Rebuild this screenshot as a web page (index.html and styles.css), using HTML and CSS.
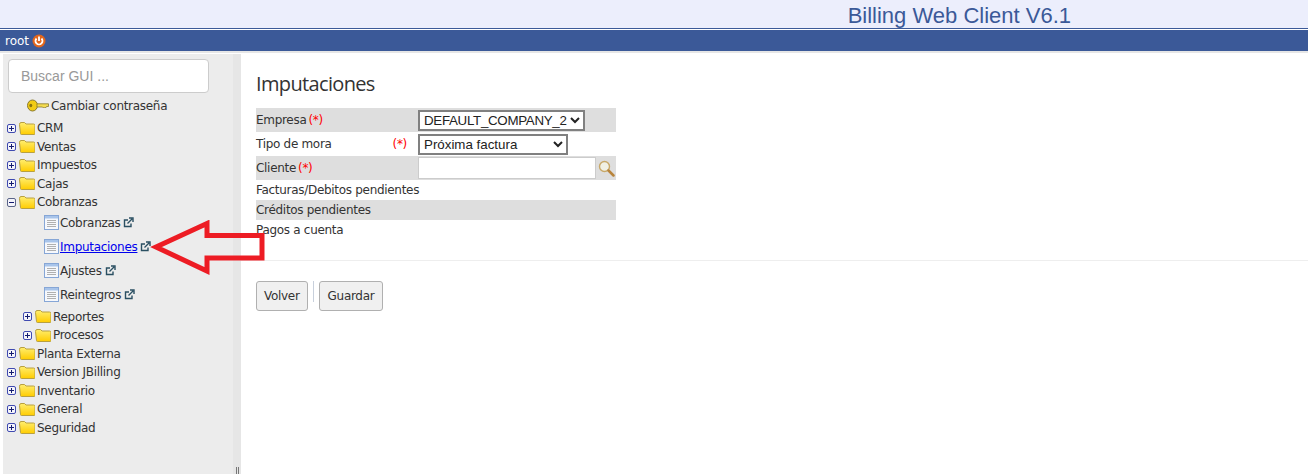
FILE: index.html
```html
<!DOCTYPE html>
<html lang="en">
<head>
    <meta charset="UTF-8">
    <title>Billing Web Client V6.1</title>
    <link rel="stylesheet" href="styles.css">
</head>
<body>
    <svg class="defs" width="0" height="0">
        <linearGradient id="folderFill" x1="0" y1="0" x2="0" y2="1"><stop offset="0" stop-color="#ffee70"/><stop offset="1" stop-color="#ffcc00"/></linearGradient>
        <symbol id="plus" viewBox="0 0 9 9"><rect x=".5" y=".5" width="8" height="8" rx="1.500" fill="#f4f4fa" stroke="#3f4ab0"/><path d="M2 4.500h5M4.500 2v5" stroke="#141c70"/></symbol>
        <symbol id="minus" viewBox="0 0 9 9"><rect x=".5" y=".5" width="8" height="8" rx="1.500" fill="#f4f4fa" stroke="#5a6488"/><path d="M2 4.500h5" stroke="#141c70"/></symbol>
        <symbol id="folder" viewBox="0 0 16 13"><path d="M.5 2.500q0-2 1.500-2h3.500l1.500 1.500h7.500q1.500 0 1.500 1.500v8q0 1-1 1h-12.500q-1 0-1-1z" fill="url(#folderFill)" stroke="#b8a040"/></symbol>
        <symbol id="page" viewBox="0 0 15 15"><rect x=".5" y=".5" width="14" height="14" fill="#f6f8fc" stroke="#86a6d6"/><rect x="1" y="1" width="13" height="2.500" fill="#a8c4ea"/><path d="M3 5.500h9M3 7.500h9M3 9.500h9M3 11.500h9" stroke="#b0b0b0"/></symbol>
        <symbol id="ext" viewBox="0 0 11 11"><path d="M8 6.500v3H1.500V3H5" fill="none" stroke="#2a4f62" stroke-width="1.400"/><path d="M4.500 6.500 9 2M6 1h4v4" fill="none" stroke="#2a4f62" stroke-width="1.400"/></symbol>
    </svg>

    <div class="banner">
        <span class="app-title">Billing Web Client V6.1</span>
    </div>
    <div class="user-bar">
        <span>root</span>
        <svg class="power" width="14" height="14" viewBox="0 0 14 14"><circle cx="7" cy="7" r="6.500" fill="#e2661c"/><path d="M4.500 4.500a3.500 3.500 0 1 0 5 0" fill="none" stroke="#fff" stroke-width="1.800"/><path d="M7 2.500v4.500" stroke="#fff" stroke-width="1.800"/></svg>
    </div>

    <div class="layout">
        <aside class="sidebar">
            <input class="search" type="text" placeholder="Buscar GUI ...">
            <ul class="tree">
                <li class="key-row">
                    <svg class="key" width="22" height="13" viewBox="0 0 22 13"><ellipse cx="5.500" cy="6.500" rx="5" ry="5.500" fill="#f2cc14" stroke="#8a7a30"/><ellipse cx="3.800" cy="6.500" rx="1.500" ry="1.800" fill="#8a7410"/><path d="M10 4.800h11.500v2.700h-2l-1 1.500-1-1-1 1-1-1H10z" fill="#f4dc50" stroke="#8a7a30" stroke-width=".8"/></svg>
                    Cambiar contraseña
                </li>
                <li class="node"><svg class="toggle"><use href="#plus"/></svg><svg class="folder"><use href="#folder"/></svg>CRM</li>
                <li class="node"><svg class="toggle"><use href="#plus"/></svg><svg class="folder"><use href="#folder"/></svg>Ventas</li>
                <li class="node"><svg class="toggle"><use href="#plus"/></svg><svg class="folder"><use href="#folder"/></svg>Impuestos</li>
                <li class="node"><svg class="toggle"><use href="#plus"/></svg><svg class="folder"><use href="#folder"/></svg>Cajas</li>
                <li class="node"><svg class="toggle"><use href="#minus"/></svg><svg class="folder"><use href="#folder"/></svg>Cobranzas</li>
                <li class="leaf"><svg class="page"><use href="#page"/></svg>Cobranzas<svg class="ext"><use href="#ext"/></svg></li>
                <li class="leaf"><svg class="page"><use href="#page"/></svg><a href="#" class="current">Imputaciones</a><svg class="ext"><use href="#ext"/></svg></li>
                <li class="leaf"><svg class="page"><use href="#page"/></svg>Ajustes<svg class="ext"><use href="#ext"/></svg></li>
                <li class="leaf"><svg class="page"><use href="#page"/></svg>Reintegros<svg class="ext"><use href="#ext"/></svg></li>
                <li class="node sub"><svg class="toggle"><use href="#plus"/></svg><svg class="folder"><use href="#folder"/></svg>Reportes</li>
                <li class="node sub"><svg class="toggle"><use href="#plus"/></svg><svg class="folder"><use href="#folder"/></svg>Procesos</li>
                <li class="node"><svg class="toggle"><use href="#plus"/></svg><svg class="folder"><use href="#folder"/></svg>Planta Externa</li>
                <li class="node"><svg class="toggle"><use href="#plus"/></svg><svg class="folder"><use href="#folder"/></svg>Version JBilling</li>
                <li class="node"><svg class="toggle"><use href="#plus"/></svg><svg class="folder"><use href="#folder"/></svg>Inventario</li>
                <li class="node"><svg class="toggle"><use href="#plus"/></svg><svg class="folder"><use href="#folder"/></svg>General</li>
                <li class="node"><svg class="toggle"><use href="#plus"/></svg><svg class="folder"><use href="#folder"/></svg>Seguridad</li>
            </ul>
        </aside>
        <div class="splitter"><span class="grip"></span></div>

        <main class="content">
            <h1>Imputaciones</h1>
            <div class="form-rows">
                <div class="row tall shaded">
                    <label class="field-label">Empresa <span class="req">(*)</span></label>
                    <select class="company"><option>DEFAULT_COMPANY_2</option></select>
                </div>
                <div class="row tall">
                    <label class="field-label spread">Tipo de mora <span class="req">(*)</span></label>
                    <select class="mora"><option>Próxima factura</option></select>
                </div>
                <div class="row tall shaded">
                    <label class="field-label">Cliente <span class="req">(*)</span></label>
                    <input class="client" type="text">
                    <svg class="lens" width="17" height="17" viewBox="0 0 17 17"><circle cx="6.500" cy="6.500" r="5" fill="#f0f0e4" stroke="#c8a868" stroke-width="1.400"/><path d="M10.500 10.500l5 5" stroke="#b8843c" stroke-width="2.500" stroke-linecap="round"/></svg>
                </div>
                <div class="row">Facturas/Debitos pendientes</div>
                <div class="row shaded">Créditos pendientes</div>
                <div class="row">Pagos a cuenta</div>
            </div>
            <hr class="rule">
            <div class="actions">
                <button type="button" class="back">Volver</button>
                <span class="divider"></span>
                <button type="button">Guardar</button>
            </div>
        </main>
    </div>

    <svg class="arrow" width="120" height="60" viewBox="0 0 120 60"><path d="M6 27 57 3.500v12h55V38H57v13z" fill="none" stroke="#ed1c24" stroke-width="5"/></svg>
</body>
</html>
```
FILE: styles.css
```css
* {
    box-sizing: border-box;
}

html, body {
    height: 100%;
}

body {
    margin: 0;
    overflow: hidden;
    background: #fff;
    color: #333;
    font-family: "DejaVu Sans", sans-serif;
    font-size: 12px;
    letter-spacing: -0.3px;
}

.defs {
    position: absolute;
}

.banner {
    height: 29px;
    padding: 3px 237px 0 0;
    background: #eceefc;
    border-bottom: 1px solid #3b5998;
    text-align: right;
}

.app-title {
    color: #3b5998;
    font-family: "Liberation Sans", sans-serif;
    font-size: 22px;
    letter-spacing: 0;
    line-height: 25px;
}

.user-bar {
    display: flex;
    align-items: center;
    gap: 3px;
    height: 21px;
    margin-top: 1px;
    padding-left: 5px;
    background: #3b5998;
    color: #fff;
    letter-spacing: 0;
}

.layout {
    display: flex;
    height: 423px;
    border-top: 2px solid #e6e6e6;
    background: #fff;
}

.sidebar {
    width: 230px;
    margin: 1px 0 0 3px;
    padding: 5px 0 0 5px;
    background: #ececec;
}

.search {
    display: block;
    width: 201px;
    height: 34px;
    padding: 0 12px;
    border: 1px solid #ccc;
    border-radius: 4px;
    font-family: "Liberation Sans", sans-serif;
    font-size: 14px;
}

.search::placeholder {
    color: #999;
}

.tree {
    list-style: none;
    margin: 3px 0 0 -5px;
    padding: 0;
}

.key-row {
    display: flex;
    align-items: center;
    height: 19px;
    padding-left: 24px;
}

.key {
    margin-right: 2px;
}

.node, .leaf {
    display: flex;
    align-items: center;
    white-space: nowrap;
}

.node {
    height: 18.500px;
    padding-left: 4px;
}

.key-row + .node {
    margin-top: 4px;
}

.node.sub {
    padding-left: 20px;
}

.leaf {
    height: 24px;
    padding-left: 41px;
}

.node + .leaf {
    margin-top: -1px;
}

.leaf + .node {
    margin-top: 1px;
}

.toggle {
    width: 9px;
    height: 9px;
    margin-right: 3px;
}

.folder {
    width: 16px;
    height: 13px;
    margin-right: 2px;
}

.page {
    width: 15px;
    height: 15px;
    margin-right: 1px;
}

.ext {
    width: 11px;
    height: 11px;
    margin-left: 3px;
}

.current {
    color: #00e;
}

.splitter {
    position: relative;
    flex: none;
    width: 8px;
    margin-top: 1px;
    background: #e6e6e6;
}

.grip {
    position: absolute;
    left: 3px;
    bottom: 0;
    width: 3px;
    height: 7px;
    border-left: 1px solid #777;
    border-right: 1px solid #777;
}

.content {
    flex: 1;
    padding-top: 19px;
}

h1 {
    margin: 0 0 12px 15px;
    font-family: "Open Sans", sans-serif;
    font-size: 20px;
    font-weight: 400;
    letter-spacing: -0.65px;
    line-height: 24px;
}

.form-rows {
    width: 360px;
    margin-left: 15px;
}

.row {
    display: flex;
    align-items: center;
    height: 20px;
}

.row.tall {
    height: 24px;
}

.row.shaded {
    background: #dedede;
}

.field-label {
    display: flex;
    gap: 2px;
    width: 162px;
}

.field-label.spread {
    justify-content: space-between;
    padding-right: 11px;
}

.req {
    color: #f00;
}

select, .client {
    height: 21px;
    border: 2px solid #808080;
    border-radius: 0;
    background: #fff;
    color: #222;
    font-family: "Liberation Sans", sans-serif;
    font-size: 13.333px;
    letter-spacing: 0;
}

select {
    padding: 0;
}

.company {
    width: 167px;
    letter-spacing: -0.3px;
}

.mora {
    width: 150px;
}

.client {
    width: 178px;
    height: 22px;
    border: 1px solid #ccc;
}

.lens {
    margin-left: 2px;
}

.rule {
    height: 1px;
    margin: 20px 0;
    border: 0;
    background: #eee;
}

.actions {
    display: flex;
    align-items: flex-start;
    margin-left: 15px;
}

button {
    height: 30px;
    padding: 0 8px;
    background: #f0f0f0;
    border: 1px solid #b0b0b0;
    border-radius: 3px;
    color: #333;
    font-family: "DejaVu Sans", sans-serif;
    font-size: 12px;
    letter-spacing: -0.3px;
}

.back {
    padding: 0 7px;
}

.divider {
    width: 1px;
    height: 21px;
    margin: 0 5px;
    background: #c8d0dc;
}

.arrow {
    position: absolute;
    left: 150px;
    top: 220px;
}
```
